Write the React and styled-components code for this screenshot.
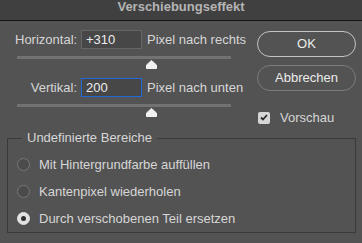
import React from 'react'
import styled, { createGlobalStyle } from 'styled-components'

const Global = createGlobalStyle`
  html, body { margin: 0; padding: 0; background: #535353; }
  * { box-sizing: border-box; }
`

const Window = styled.div`
  width: 362px;
  height: 243px;
  background: #535353;
  font-family: "Liberation Sans", Arial, sans-serif;
  font-size: 13px;
  color: #d6d6d6;
  overflow: hidden;
`

const TitleBar = styled.div`
  height: 21px;
  background: #404040;
  border-bottom: 1px solid #141414;
  text-align: center;
  font-weight: bold;
  color: #b4b4b4;
  line-height: 13px;
`

const Top = styled.div`
  display: flex;
  height: 109px;
`

const LeftCol = styled.div`
  width: 250px;
  padding: 9px 0 0 15px;
  display: flex;
  flex-direction: column;
`

const FieldRow = styled.div`
  display: flex;
  align-items: center;
  height: 19px;
  margin-top: ${p => p.$top || 0}px;
`

const Label = styled.div`
  width: 62px;
  text-align: right;
`

const Input = styled.div`
  width: 61px;
  height: 19px;
  margin-left: 4px;
  padding-left: 4px;
  background: #474747;
  border: 1px solid ${p => (p.$focus ? '#1f6ad8' : '#656565')};
  color: #ececec;
  line-height: 17px;
`

const Unit = styled.div`
  margin-left: 5px;
  white-space: nowrap;
`

const Slider = styled.div`
  position: relative;
  width: 214px;
  height: 14px;
  margin: 7px 0 0 2px;
`

const Track = styled.div`
  height: 3px;
  background: #727272;
`

const Thumb = styled.svg`
  position: absolute;
  left: ${p => p.$pos}px;
  top: 4px;
`

const RightCol = styled.div`
  padding: 10px 0 0 7px;
  display: flex;
  flex-direction: column;
`

const Button = styled.div`
  width: 99px;
  height: 26px;
  border-radius: 13px;
  border: 1px solid ${p => (p.$primary ? '#c4c4c4' : '#7c7c7c')};
  color: #ececec;
  text-align: center;
  line-height: 24px;
  margin-bottom: 8px;
`

const CheckRow = styled.div`
  display: flex;
  align-items: center;
  margin: 11px 0 0 1px;
`

const Box = styled.div`
  width: 12px;
  height: 12px;
  border-radius: 2px;
  background: #d6d6d6;
  display: flex;
  align-items: center;
  justify-content: center;
  margin-right: 10px;
`

const Group = styled.fieldset`
  margin: 0 6px 0 7px;
  padding: 0 0 0 9px;
  border: 1px solid #3a3a3a;
  height: 103px;
`

const Legend = styled.legend`
  margin-left: 5px;
  padding: 0 5px;
  line-height: 16px;
`

const RadioRow = styled.div`
  display: flex;
  align-items: center;
  height: 27px;
  margin-top: ${p => p.$top || 0}px;
`

const Radio = styled.div`
  width: 13px;
  height: 13px;
  border-radius: 50%;
  margin-right: 9px;
  border: 1px solid ${p => (p.$on ? '#e2e2e2' : '#777777')};
  background: ${p => (p.$on ? '#e2e2e2' : '#4b4b4b')};
  display: flex;
  align-items: center;
  justify-content: center;
  &::after {
    content: '';
    display: ${p => (p.$on ? 'block' : 'none')};
    width: 5px;
    height: 5px;
    border-radius: 50%;
    background: #2e2e2e;
  }
`

const ThumbIcon = ({ pos }) => (
  <Thumb $pos={pos} width="11" height="9" viewBox="0 0 11 9">
    <path d="M5.5 0.5 L10.5 5 L10.5 8.5 L0.5 8.5 L0.5 5 Z" fill="#f2f2f2" strokeLinejoin="round" stroke="#f2f2f2" />
  </Thumb>
)

export default function App() {
  return (
    <Window>
      <Global />
      <TitleBar>Verschiebungseffekt</TitleBar>
      <Top>
        <LeftCol>
          <FieldRow>
            <Label>Horizontal:</Label>
            <Input>+310</Input>
            <Unit>Pixel nach rechts</Unit>
          </FieldRow>
          <Slider>
            <Track />
            <ThumbIcon pos={129} />
          </Slider>
          <FieldRow $top={8}>
            <Label>Vertikal:</Label>
            <Input $focus>200</Input>
            <Unit>Pixel nach unten</Unit>
          </FieldRow>
          <Slider>
            <Track />
            <ThumbIcon pos={129} />
          </Slider>
        </LeftCol>
        <RightCol>
          <Button $primary>OK</Button>
          <Button>Abbrechen</Button>
          <CheckRow>
            <Box>
              <svg width="8" height="7" viewBox="0 0 8 7">
                <path d="M1 3.5 L3 5.5 L7 1" fill="none" stroke="#2a2a2a" strokeWidth="1.8" />
              </svg>
            </Box>
            Vorschau
          </CheckRow>
        </RightCol>
      </Top>
      <Group>
        <Legend>Undefinierte Bereiche</Legend>
        <RadioRow $top={5}>
          <Radio />
          Mit Hintergrundfarbe auffüllen
        </RadioRow>
        <RadioRow>
          <Radio />
          Kantenpixel wiederholen
        </RadioRow>
        <RadioRow>
          <Radio $on />
          Durch verschobenen Teil ersetzen
        </RadioRow>
      </Group>
    </Window>
  )
}
